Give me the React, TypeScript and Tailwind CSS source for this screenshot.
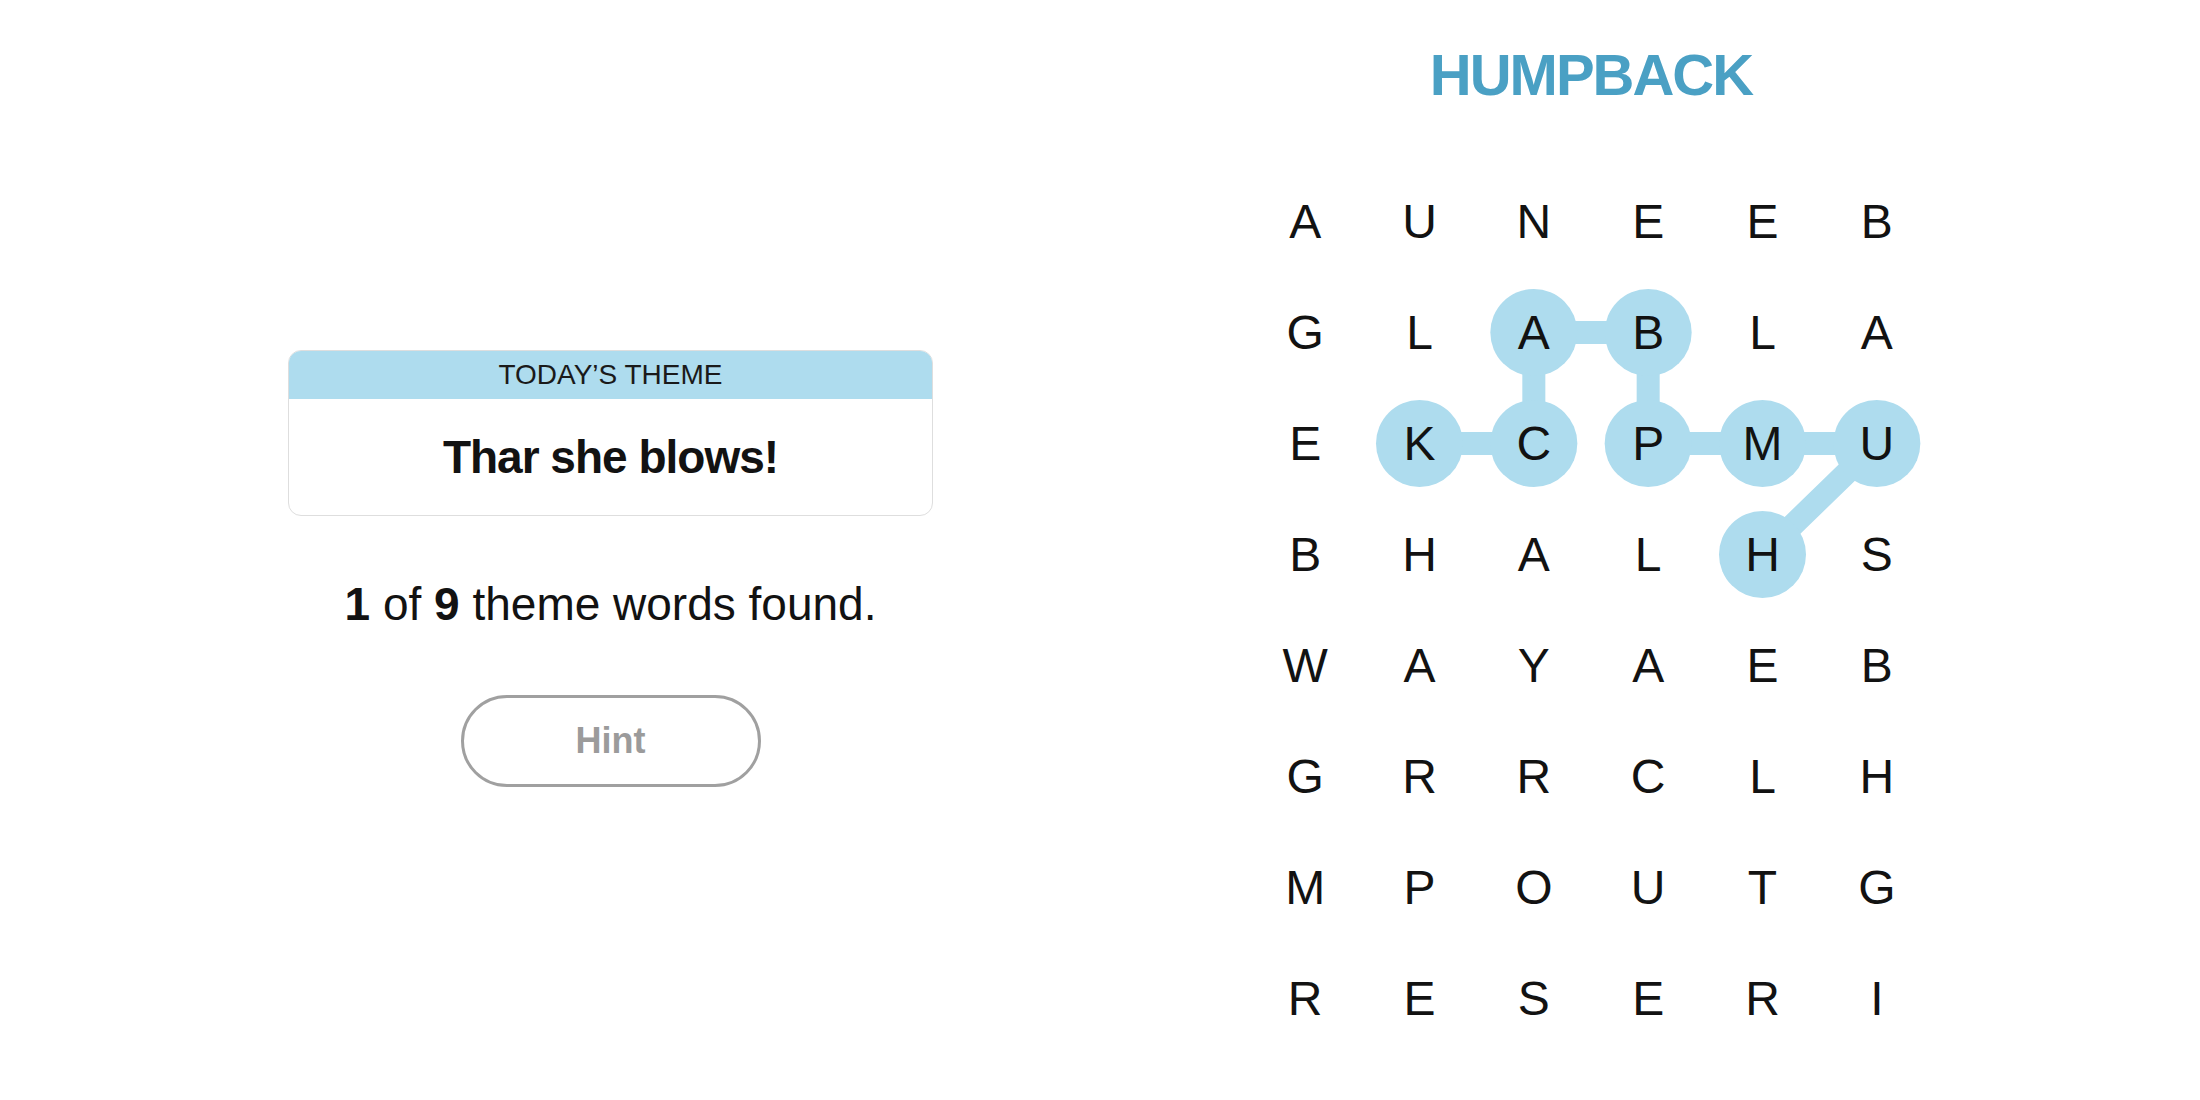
const ROWS = [
  ["A", "U", "N", "E", "E", "B"],
  ["G", "L", "A", "B", "L", "A"],
  ["E", "K", "C", "P", "M", "U"],
  ["B", "H", "A", "L", "H", "S"],
  ["W", "A", "Y", "A", "E", "B"],
  ["G", "R", "R", "C", "L", "H"],
  ["M", "P", "O", "U", "T", "G"],
  ["R", "E", "S", "E", "R", "I"],
];

// HUMPBACK path as [row, col]
const PATH: [number, number][] = [
  [3, 4],
  [2, 5],
  [2, 4],
  [2, 3],
  [1, 3],
  [1, 2],
  [2, 2],
  [2, 1],
];

const CELL_W = 686 / 6;
const CELL_H = 111;

function center([r, c]: [number, number]) {
  return { x: CELL_W / 2 + CELL_W * c, y: CELL_H / 2 + CELL_H * r };
}

function Board() {
  const pts = PATH.map(center);
  return (
    <div className="relative w-[686px] h-[888px]">
      {/* found word highlight */}
      <svg
        className="absolute inset-0"
        width={686}
        height={888}
        viewBox="0 0 686 888"
      >
        <polyline
          points={pts.map((p) => `${p.x},${p.y}`).join(" ")}
          fill="none"
          stroke="#aedcee"
          strokeWidth={23}
          strokeLinejoin="round"
        />
        {pts.map((p, i) => (
          <circle key={i} cx={p.x} cy={p.y} r={43.5} fill="#aedcee" />
        ))}
      </svg>

      <div className="relative grid grid-cols-6">
        {ROWS.flat().map((ch, i) => (
          <div
            key={i}
            className="h-[111px] flex items-center justify-center text-[48px] leading-none text-[#121212]"
          >
            {ch}
          </div>
        ))}
      </div>
    </div>
  );
}

export default function App() {
  return (
    <div className="w-[2200px] h-[1100px] bg-white flex font-['Liberation_Sans',Arial,sans-serif]">
      {/* Left: theme panel */}
      <div className="ml-[288px] pt-[350px] w-[645px] flex flex-col items-center">
        <div className="w-full rounded-[13px] border border-[#dedede] overflow-hidden">
          <div className="h-[48px] bg-[#aedcee] flex items-center justify-center text-[28px] leading-none text-[#1a1a1a]">
            TODAY’S THEME
          </div>
          <div className="h-[116px] flex items-center justify-center text-[46px] font-bold leading-none tracking-[-1px] text-[#121212]">
            Thar she blows!
          </div>
        </div>

        <p className="mt-[65px] text-[46px] leading-none text-[#121212]">
          <span className="font-bold">1</span> of{" "}
          <span className="font-bold">9</span> theme words found.
        </p>

        <button className="mt-[68px] w-[300px] h-[92px] rounded-full border-[3px] border-[#a0a0a0] bg-white flex items-center justify-center text-[36px] font-bold leading-none text-[#9b9b9b]">
          Hint
        </button>
      </div>

      {/* Right: board */}
      <div className="ml-[315px] w-[686px] pt-[46px] flex flex-col">
        <h1 className="text-center text-[58px] font-bold leading-none tracking-[-2px] text-[#4aa0c4]">
          HUMPBACK
        </h1>
        <div className="mt-[62px]">
          <Board />
        </div>
      </div>
    </div>
  );
}
